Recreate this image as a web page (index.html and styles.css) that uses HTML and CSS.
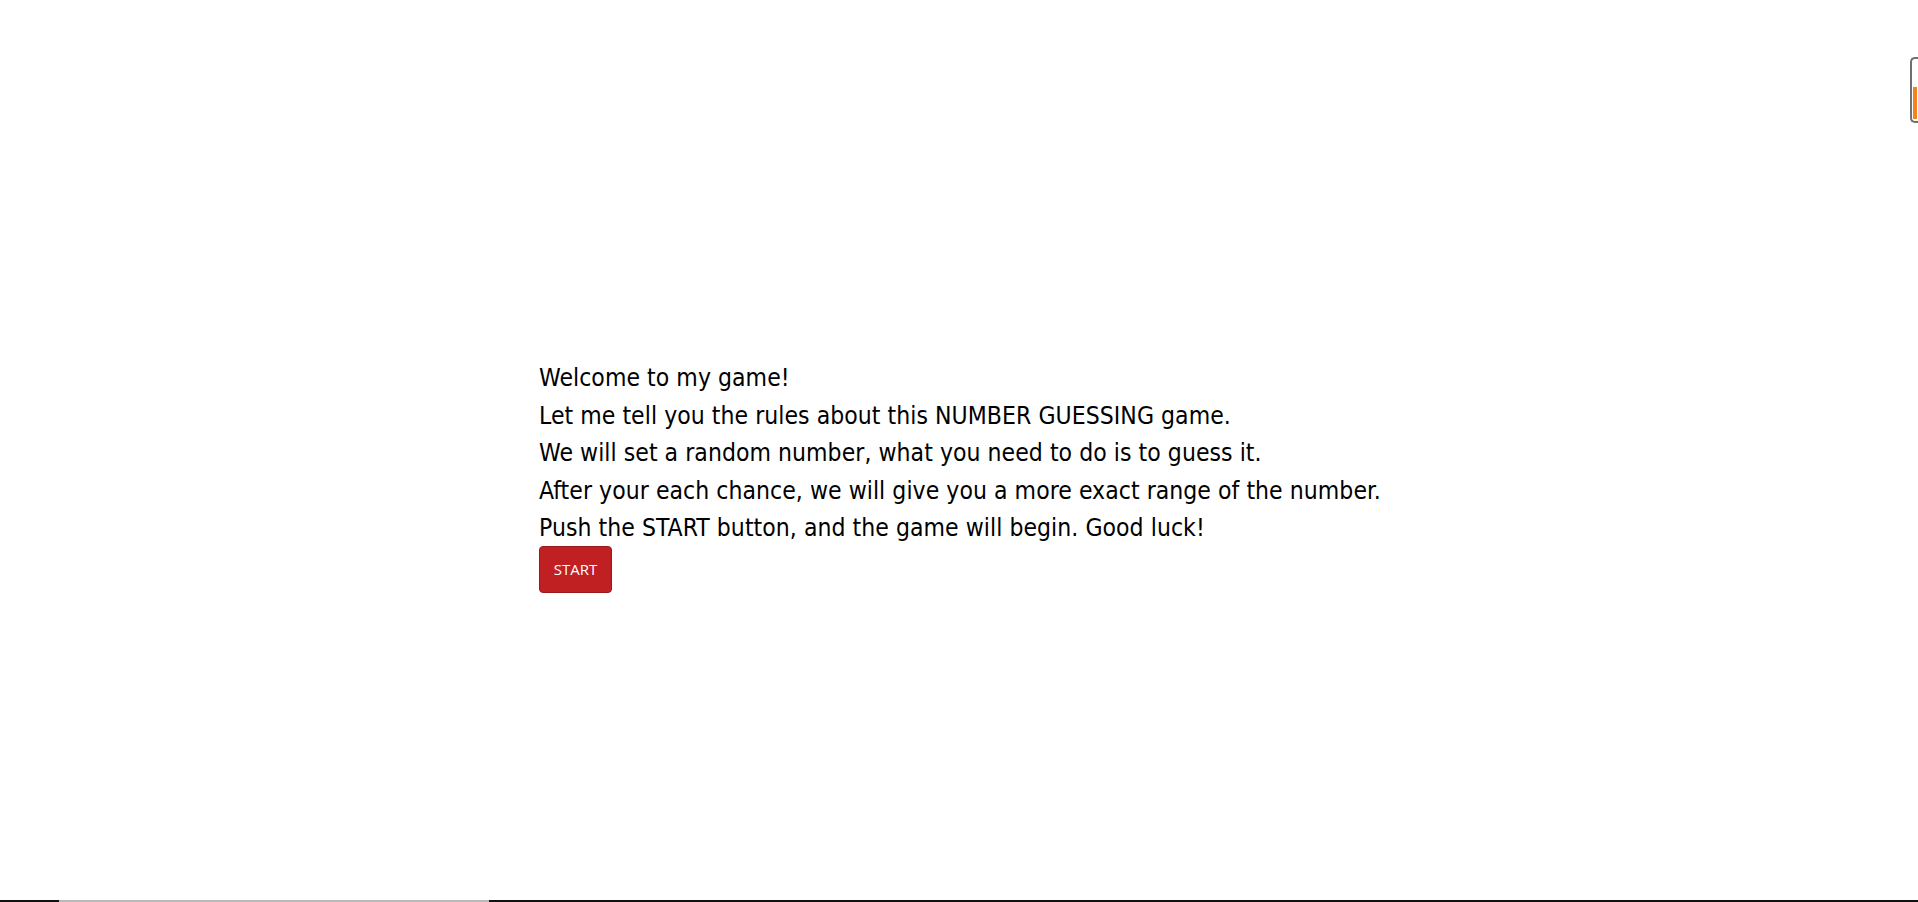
FILE: index.html
```html
<!DOCTYPE html>
<html lang="en">
<head>
<meta charset="utf-8">
<title>Number Guessing Game</title>
<link rel="stylesheet" href="styles.css">
</head>
<body>
<main class="page">
  <section class="intro">
    <div class="rule">Welcome to my game!</div>
    <div class="rule">Let me tell you the rules about this NUMBER GUESSING game.</div>
    <div class="rule">We will set a random number, what you need to do is to guess it.</div>
    <div class="rule">After your each chance, we will give you a more exact range of the number.</div>
    <div class="rule">Push the START button, and the game will begin. Good luck!</div>
    <button class="start-btn" type="button">START</button>
  </section>
</main>
<div class="side-gauge"><div class="side-gauge-fill"></div></div>
<div class="bottom-bar"><span class="bar-seg dark-a"></span><span class="bar-seg light"></span><span class="bar-seg dark-b"></span></div>
</body>
</html>
```

FILE: styles.css
```css
html, body {
  margin: 0;
  padding: 0;
  background: #ffffff;
}
.page {
  padding: 359px 0 0 539px;
}
.intro {
  display: flex;
  flex-direction: column;
  align-items: flex-start;
  font-family: "DejaVu Sans Condensed", "DejaVu Sans", sans-serif;
  font-size: 24.5px;
  letter-spacing: 0.05px;
  line-height: 37.5px;
  color: #000000;
}
.rule {
  white-space: nowrap;
}
.start-btn {
  margin-top: -1px;
  width: 73px;
  height: 47px;
  background: #c12023;
  border: 1px solid #9a1a1c;
  border-radius: 4px;
  color: #ffffff;
  font-family: "Open Sans", "Noto Sans", sans-serif;
  font-size: 15px;
  letter-spacing: 0;
  padding: 0;
  cursor: pointer;
}
.side-gauge {
  position: fixed;
  top: 57px;
  right: 0;
  width: 6px;
  height: 62px;
  border: 2px solid #6f6f6f;
  border-right: none;
  border-radius: 5px 0 0 5px;
  background: #ffffff;
}
.side-gauge-fill {
  position: absolute;
  left: 1px;
  right: 1px;
  bottom: 2px;
  height: 32px;
  background: #f5841f;
}
.bottom-bar {
  position: fixed;
  left: 0;
  right: 0;
  bottom: 0;
  height: 2px;
  display: flex;
}
.bar-seg {
  display: block;
  height: 100%;
}
.dark-a { width: 59px; background: #111111; }
.light { width: 430px; background: #b8b8b8; }
.dark-b { flex: 1; background: #111111; }
```
